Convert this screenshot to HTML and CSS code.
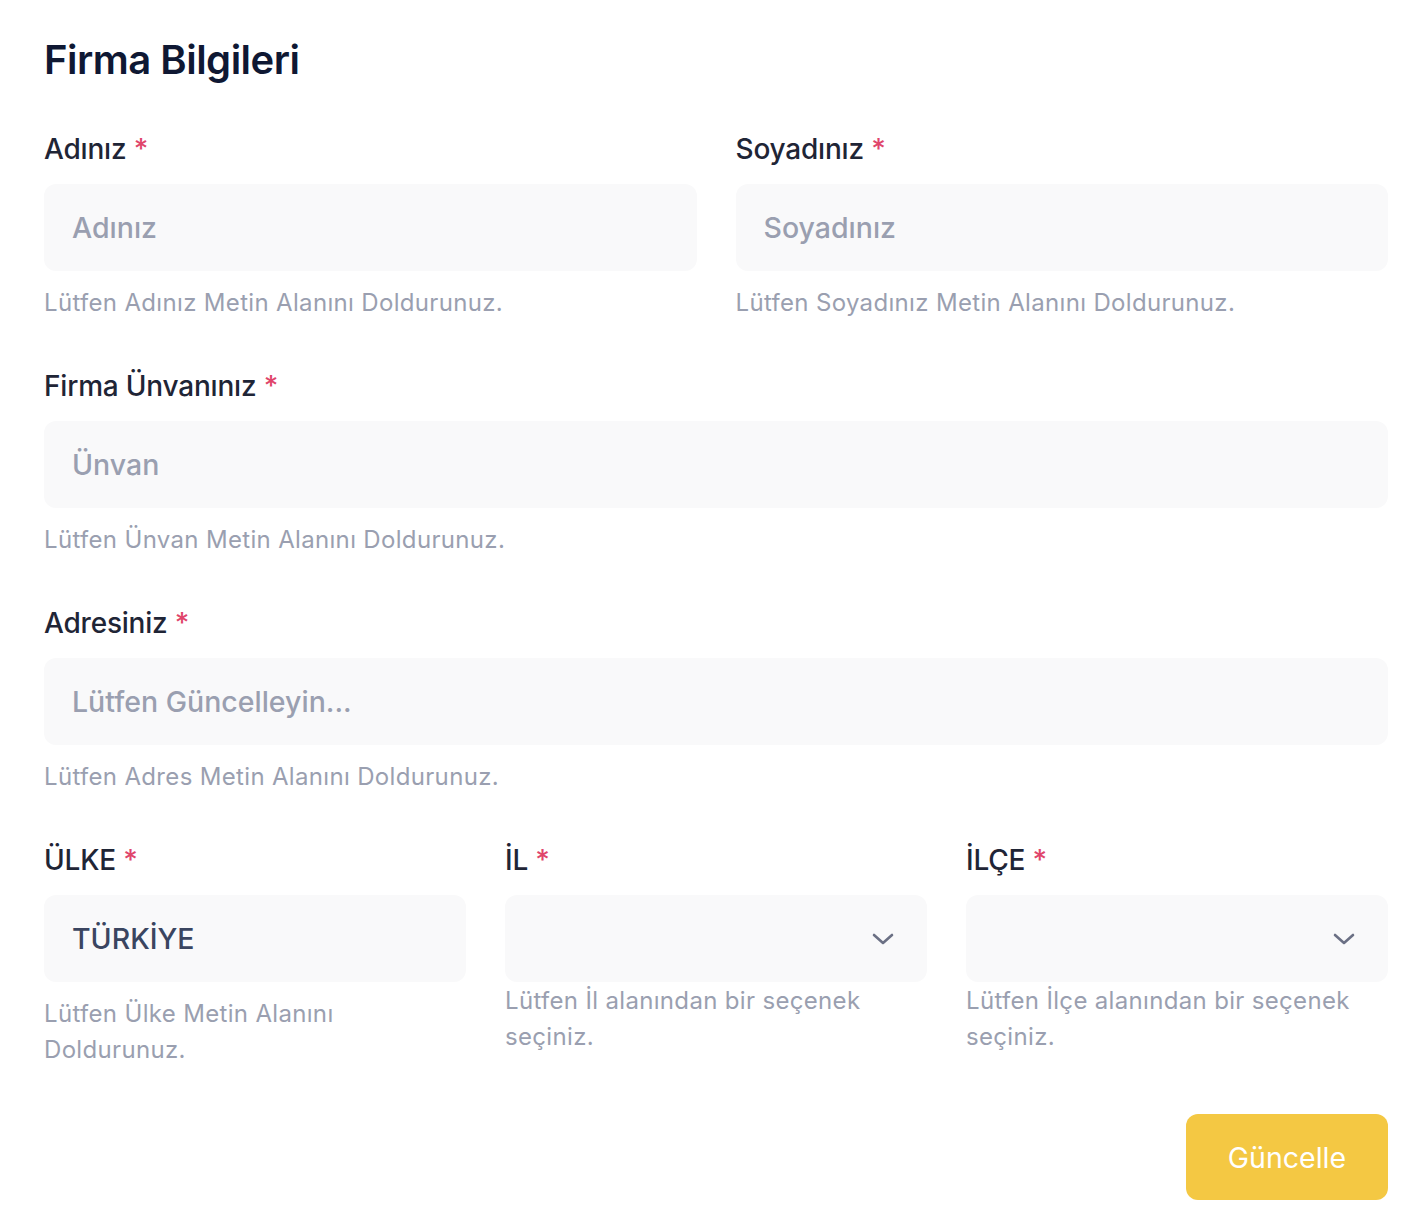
FILE: index.html
```html
<!DOCTYPE html>
<html lang="tr">
<head>
  <meta charset="UTF-8">
  <meta name="viewport" content="width=device-width, initial-scale=1.0">
  <title>Firma Bilgileri</title>
  <link rel="stylesheet" href="styles.css">
</head>
<body>

  <form class="company-form">
    <h1>Firma Bilgileri</h1>

    <div class="row row--2">
      <div class="field">
        <label>Adınız <span class="req">*</span></label>
        <input type="text" placeholder="Adınız">
        <p class="help">Lütfen Adınız Metin Alanını Doldurunuz.</p>
      </div>
      <div class="field">
        <label>Soyadınız <span class="req">*</span></label>
        <input type="text" placeholder="Soyadınız">
        <p class="help">Lütfen Soyadınız Metin Alanını Doldurunuz.</p>
      </div>
    </div>

    <div class="field">
      <label>Firma Ünvanınız <span class="req">*</span></label>
      <input type="text" placeholder="Ünvan">
      <p class="help">Lütfen Ünvan Metin Alanını Doldurunuz.</p>
    </div>

    <div class="field">
      <label>Adresiniz <span class="req">*</span></label>
      <input type="text" placeholder="Lütfen Güncelleyin...">
      <p class="help">Lütfen Adres Metin Alanını Doldurunuz.</p>
    </div>

    <div class="row row--3">
      <div class="field">
        <label>ÜLKE <span class="req">*</span></label>
        <input type="text" value="TÜRKİYE" class="filled">
        <p class="help">Lütfen Ülke Metin Alanını Doldurunuz.</p>
      </div>
      <div class="field">
        <label>İL <span class="req">*</span></label>
        <div class="select">
          <svg width="22" height="12" viewBox="0 0 22 12"><path d="M2 2l9 8 9-8" fill="none" stroke="#6b7084" stroke-width="2.6" stroke-linecap="round" stroke-linejoin="round"/></svg>
        </div>
        <p class="help help--tight">Lütfen İl alanından bir seçenek seçiniz.</p>
      </div>
      <div class="field">
        <label>İLÇE <span class="req">*</span></label>
        <div class="select">
          <svg width="22" height="12" viewBox="0 0 22 12"><path d="M2 2l9 8 9-8" fill="none" stroke="#6b7084" stroke-width="2.6" stroke-linecap="round" stroke-linejoin="round"/></svg>
        </div>
        <p class="help help--tight">Lütfen İlçe alanından bir seçenek seçiniz.</p>
      </div>
    </div>

    <div class="actions">
      <button type="button" class="button">Güncelle</button>
    </div>
  </form>

</body>
</html>
```

FILE: styles.css
```css
:root{
  --title:#0f1833;
  --label:#1f2536;
  --muted:#9a9fb0;
  --field:#f9f9fa;
  --req:#e0456b;
  --accent:#f4c843;
}
*{margin:0;padding:0;box-sizing:border-box;font-family:Inter,'Noto Sans',sans-serif;}
body{background:#fff;}

.company-form{padding:36px 26px 30px 44px;}
h1{font-size:40px;font-weight:600;line-height:48px;color:var(--title);margin-bottom:44px;letter-spacing:-.5px;}

.row{display:grid;column-gap:39px;}
.row--2{grid-template-columns:1fr 1fr;}
.row--3{grid-template-columns:1fr 1fr 1fr;}

.field{margin-bottom:44px;}
.field label{display:block;font-size:28px;font-weight:500;line-height:42px;color:var(--label);margin-bottom:14px;letter-spacing:-.2px;}
.req{color:var(--req);}

.field input,.select{display:block;width:100%;height:87px;border:0;border-radius:12px;background:var(--field);
  padding:0 28px;font-size:28.5px;font-weight:500;color:#3a4358;outline:none;}
.field input::placeholder{color:var(--muted);}
.field input.filled{color:#3a4560;}

.select{display:flex;align-items:center;justify-content:flex-end;padding-right:33px;}

.help{font-size:24px;line-height:36px;color:var(--muted);margin-top:14px;letter-spacing:.33px;}
.help--tight{margin-top:1px;}

.row--3 .field{margin-bottom:46px;}

.actions{display:flex;justify-content:flex-end;}
.button{width:202px;height:86px;border:0;border-radius:12px;background:var(--accent);color:#fff;
  font-size:28.5px;font-weight:400;cursor:pointer;}
```
